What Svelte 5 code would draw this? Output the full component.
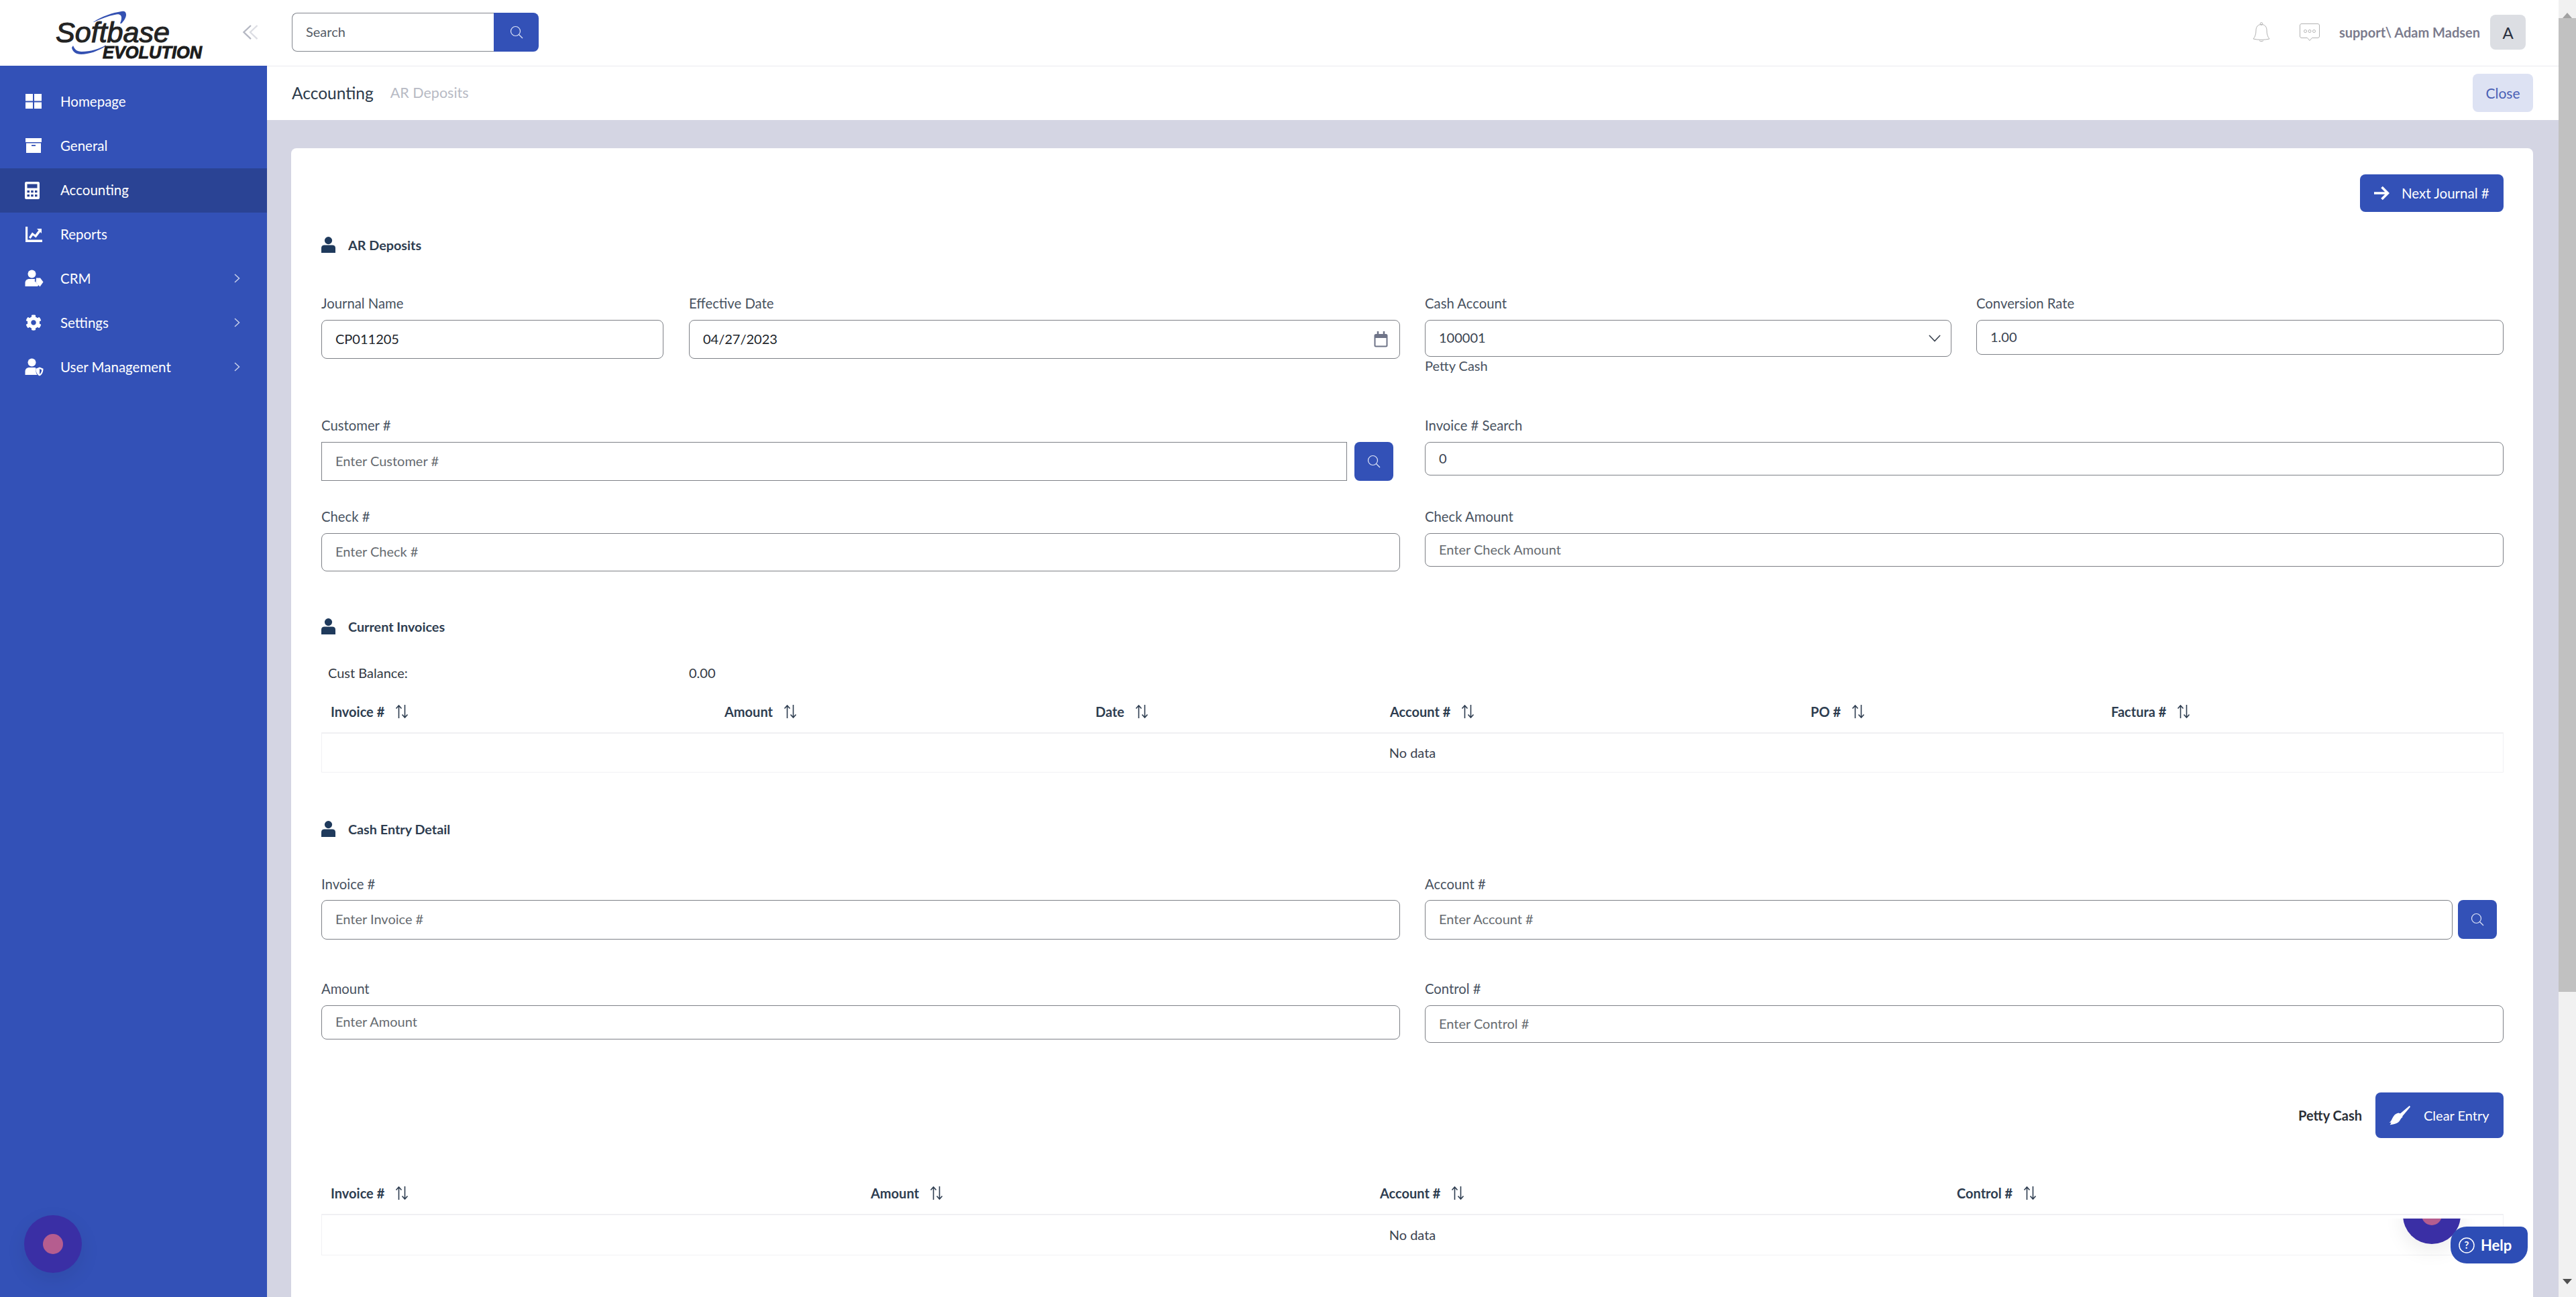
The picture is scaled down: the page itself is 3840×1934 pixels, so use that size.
<script>
  const nav = [
    { label: 'Homepage', icon: 'home' },
    { label: 'General', icon: 'archive' },
    { label: 'Accounting', icon: 'calc', active: true },
    { label: 'Reports', icon: 'chart' },
    { label: 'CRM', icon: 'crm', more: true },
    { label: 'Settings', icon: 'gear', more: true },
    { label: 'User Management', icon: 'shield', more: true }
  ];
  const invoiceCols = ['Invoice #', 'Amount', 'Date', 'Account #', 'PO #', 'Factura #'];
  const entryCols = ['Invoice #', 'Amount', 'Account #', 'Control #'];
</script>

{#snippet searchIcon()}
  <svg class="search-ico" viewBox="0 0 20 20" fill="none" stroke="currentColor" stroke-width="1.2">
    <circle cx="8.5" cy="8.5" r="7" />
    <path d="M13.5 13.5 19 19" />
  </svg>
{/snippet}

{#snippet sectionIcon()}
  <svg class="section-ico" viewBox="0 0 21 24">
    <ellipse cx="10.5" cy="5.6" rx="5.6" ry="5.6" fill="#1f3a5c" />
    <path d="M0 24v-7.5C0 14 2 12.5 4.5 12.5h12c2.500 0 4.500 1.500 4.500 4V24z" fill="#1f3a5c" />
  </svg>
{/snippet}

{#snippet sortIcon()}
  <svg class="sort-ico" viewBox="0 0 20 20" fill="none" stroke="#2e3d50" stroke-width="1.6">
    <path d="M5.500 20V1M1.500 5.500 5.500 1l4 4.500" />
    <path d="M14.500 0v19M10.500 14.500l4 4.500 4-4.500" />
  </svg>
{/snippet}

{#snippet navIcon(name)}
  <svg class="nav-ico" viewBox="0 0 30 30" fill="#fff">
    {#if name === 'home'}
      <path d="M3 4h11v10.500H3zM16 4h11v10.500H16zM3 16.500h11V26H3zM16 16.500h11V26H16z" />
    {:else if name === 'archive'}
      <path d="M3 4h24v6H3zM4 11.500h22V26H4z" />
      <rect x="12" y="14" width="6" height="1.800" fill="#3351b7" />
    {:else if name === 'calc'}
      <path fill-rule="evenodd" d="M4 3h18c1 0 2 1 2 2v22c0 1-1 2-2 2H4c-1 0-2-1-2-2V5c0-1 1-2 2-2zm1.500 3.500v6h15v-6zM5.500 16v3.200h3.500V16zm5.700 0v3.200h3.500V16zm5.800 0v3.200h3.500V16zM5.500 22v3.200h3.500V22zm5.700 0v3.200h3.500V22zm5.800 0v3.200h3.500V22z" />
    {:else if name === 'chart'}
      <path d="M3 4h3.200v19.400H28V27H3z" />
      <path d="M8 20l5-7.500 4.500 3.500 5-6.500-2.500-2.500H27v7l-2-2-6.500 8.500-4.500-3.500-3.500 5z" />
    {:else if name === 'crm'}
      <circle cx="12.500" cy="8.500" r="6" />
      <path d="M2.500 27v-5c0-4 3-6 6-6h8l1 1-1 2 6 6-1.500 2z" />
      <path d="M19 14.500h6l4.500 6-5 7-6-6.500z" />
    {:else if name === 'gear'}
      <svg x="3" y="3" width="24" height="24" viewBox="0 0 512 512">
        <path d="M487.4 315.7l-42.6-24.6c4.3-23.2 4.3-47 0-70.2l42.6-24.6c4.900-2.800 7.100-8.600 5.500-14-11.100-35.600-30-67.800-54.700-94.600-3.800-4.100-10-5.100-14.800-2.300L380.800 110c-17.900-15.400-38.500-27.300-60.800-35.100V25.800c0-5.600-3.900-10.500-9.400-11.700-36.700-8.200-74.300-7.800-109.200 0-5.500 1.200-9.400 6.100-9.400 11.700V75c-22.200 7.900-42.800 19.800-60.800 35.100L88.700 85.500c-4.900-2.800-11-1.900-14.800 2.300-24.700 26.700-43.600 58.900-54.700 94.600-1.700 5.400.6 11.200 5.500 14L67.300 221c-4.300 23.200-4.300 47 0 70.200l-42.600 24.600c-4.900 2.800-7.100 8.600-5.500 14 11.100 35.600 30 67.800 54.700 94.600 3.800 4.100 10 5.100 14.800 2.300l42.600-24.600c17.900 15.400 38.500 27.300 60.800 35.100v49.200c0 5.600 3.900 10.500 9.400 11.700 36.700 8.200 74.300 7.800 109.200 0 5.500-1.200 9.400-6.100 9.400-11.700v-49.200c22.200-7.900 42.800-19.800 60.800-35.100l42.600 24.600c4.900 2.800 11 1.900 14.800-2.300 24.700-26.700 43.600-58.900 54.700-94.600 1.500-5.500-.7-11.300-5.600-14.100zM256 336c-44.100 0-80-35.900-80-80s35.900-80 80-80 80 35.900 80 80-35.900 80-80 80z" />
      </svg>
    {:else}
      <circle cx="12.500" cy="8.500" r="6" />
      <path d="M2.500 27v-5c0-4 3-6 6-6h9l1 1v4c0 2 .5 4 2 6z" />
      <path fill-rule="evenodd" d="M24 15.500l5.500 2.200c0 5-1.500 8.800-5.500 10.800-4-2-5.500-5.800-5.500-10.800zm0 2.500v8c2-1.400 3-3.800 3.200-6.600z" />
    {/if}
  </svg>
{/snippet}

{#snippet field(label, value, placeholder, size)}
  <div class="field">
    <span class="label">{label}</span>
    <input class="inp {size}" {value} {placeholder} readonly />
  </div>
{/snippet}

{#snippet searchField(label, placeholder)}
  <div class="field">
    <span class="label">{label}</span>
    <div class="with-btn">
      <input class="inp square h58" {placeholder} readonly />
      <button class="square-btn">{@render searchIcon()}</button>
    </div>
  </div>
{/snippet}

{#snippet table(cols, kind)}
  <div class="table {kind}">
    <div class="thead">
      {#each cols as col}
        <div class="th">{col}{@render sortIcon()}</div>
      {/each}
    </div>
    <div class="tbody">No data</div>
  </div>
{/snippet}

<div class="page">
  <aside class="sidebar">
    <div class="brand">
      <svg class="logo" viewBox="0 0 398 98">
        <path d="M139 33C152 24 168 19 181 17c4-1 7 0 7 5 0 4-3 9-7 13l-2 0c2-5 3-9 1-12-2-2-5-2-9-1-10 2-21 6-31 11z" fill="#3451b2" />
        <path d="M109 68c2 5 5 9 13 9 12 0 27-4 36-10l-1 2c-10 7-25 12-36 12-8 0-13-4-14-10z" fill="#3451b2" />
        <text class="logo-main" x="83" y="63" textLength="170" lengthAdjust="spacingAndGlyphs">Softbase</text>
        <text class="logo-sub" x="153" y="87" textLength="148" lengthAdjust="spacingAndGlyphs">EVOLUTION</text>
      </svg>
      <svg class="collapse" viewBox="0 0 24 24" fill="none" stroke-width="2.400">
        <path d="M13 1 2 11.500 13 22" stroke="#b4b7c2" />
        <path d="M23 1 12 11.500 23 22" stroke="#dcdde3" />
      </svg>
    </div>
    <nav class="nav">
      {#each nav as item}
        <div class="nav-item" class:active={item.active}>
          <span class="nav-ico-box">{@render navIcon(item.icon)}</span>
          <span class="nav-label">{item.label}</span>
          {#if item.more}
            <svg class="nav-more" viewBox="0 0 9 14" fill="none" stroke="#c8d0ea" stroke-width="1.500">
              <path d="M1 1l6.500 6L1 13" />
            </svg>
          {/if}
        </div>
      {/each}
    </nav>
    <div class="orb left-orb"><span class="orb-dot"></span></div>
  </aside>

  <main class="main">
    <header class="topbar">
      <div class="search">
        <input class="search-input" placeholder="Search" readonly />
        <button class="search-btn">{@render searchIcon()}</button>
      </div>
      <div class="top-right">
        <svg class="bell" viewBox="0 0 26 30" fill="none" stroke="#b2b2b2" stroke-width="1">
          <path d="M13 3.500c-5 0-8 3.500-8 8.500 0 6-1.500 10-4 13 7 1.800 17 1.800 24 0-2.500-3-4-7-4-13 0-5-3-8.500-8-8.500z" />
          <circle cx="13" cy="2.500" r="1.800" />
          <path d="M10 27.500c1 1.600 5 1.600 6 0" />
        </svg>
        <svg class="chat" viewBox="0 0 30 26" fill="none" stroke="#b2b2b2" stroke-width="1">
          <path d="M3 .5h24c1.500 0 2.500 1 2.500 2.500v16c0 1.500-1 2.500-2.500 2.500h-8.500L15 25.500l-3.500-4H3c-1.500 0-2.500-1-2.500-2.500V3C.5 1.500 1.500.5 3 .5z" />
          <circle cx="8.500" cy="11.500" r="2" /><circle cx="15" cy="11.500" r="2" /><circle cx="21.500" cy="11.500" r="2" />
        </svg>
        <span class="user">support\ Adam Madsen</span>
        <span class="avatar">A</span>
      </div>
    </header>

    <div class="crumbs">
      <span class="crumb-main">Accounting</span>
      <span class="crumb-sub">AR Deposits</span>
      <button class="close">Close</button>
    </div>

    <div class="content">
      <section class="card">
        <div class="actions">
          <button class="primary next">
            <svg class="next-ico" viewBox="0 0 24 24" fill="none" stroke="#fff" stroke-width="3.600">
              <path d="M1 12h20M12.500 3l9 9-9 9" />
            </svg>
            Next Journal #
          </button>
        </div>

        <div class="section first">{@render sectionIcon()}AR Deposits</div>

        <div class="row row-1">
          <div class="half first-half">
            {@render field('Journal Name', 'CP011205', '', 'h58 dark')}
            <div class="field">
              <span class="label">Effective Date</span>
              <div class="adorned">
                <input class="inp h58 dark" value="04/27/2023" readonly />
                <svg class="cal" viewBox="0 0 21 24" fill="none" stroke="#6f7488" stroke-width="2">
                  <rect x="1.500" y="5" width="18" height="17.500" rx="1.500" />
                  <path d="M1.500 8h18" stroke-width="4" />
                  <path d="M6 0v5M15 0v5" stroke-width="2.500" />
                </svg>
              </div>
            </div>
          </div>
          <div class="half second-half">
            <div class="field">
              <span class="label">Cash Account</span>
              <div class="adorned">
                <input class="inp h55" value="100001" readonly />
                <svg class="chev" viewBox="0 0 20 12" fill="none" stroke="#3c4450" stroke-width="1.800">
                  <path d="M1 1l9 9.500L19 1" />
                </svg>
              </div>
              <span class="hint">Petty Cash</span>
            </div>
            {@render field('Conversion Rate', '1.00', '', 'h52')}
          </div>
        </div>

        <div class="row row-2">
          {@render searchField('Customer #', 'Enter Customer #')}
          {@render field('Invoice # Search', '0', '', 'h50')}
        </div>

        <div class="row row-3">
          {@render field('Check #', '', 'Enter Check #', 'h57')}
          {@render field('Check Amount', '', 'Enter Check Amount', 'h50')}
        </div>

        <div class="section second">{@render sectionIcon()}Current Invoices</div>

        <div class="balance">
          <span class="balance-label">Cust Balance:</span>
          <span>0.00</span>
        </div>

        {@render table(invoiceCols, 'invoices')}

        <div class="section third">{@render sectionIcon()}Cash Entry Detail</div>

        <div class="row row-4">
          {@render field('Invoice #', '', 'Enter Invoice #', 'h59')}
          <div class="field">
            <span class="label">Account #</span>
            <div class="with-btn wide">
              <input class="inp h59" placeholder="Enter Account #" readonly />
              <button class="square-btn">{@render searchIcon()}</button>
            </div>
          </div>
        </div>

        <div class="row row-5">
          {@render field('Amount', '', 'Enter Amount', 'h51')}
          {@render field('Control #', '', 'Enter Control #', 'h56')}
        </div>

        <div class="clear-row">
          <span class="clear-name">Petty Cash</span>
          <button class="primary clear">
            <svg class="broom" viewBox="0 0 28 28" fill="#fff">
              <path d="M27 1.500 28 3 17.500 15.500l-3.500-3z" />
              <path d="M12.500 11c3 .5 5 2.500 5.500 5.500-3 1.500-3 5-6 7-2.500 1.500-6 2.500-10.500 3 .8-1 1.300-2 1.600-3-1 .2-2 .2-2.600.2 3-2 3.500-5.200 5.500-8.200 1.500-2.500 4-4 6.500-4.500z" />
            </svg>
            Clear Entry
          </button>
        </div>

        {@render table(entryCols, 'entries')}
      </section>
    </div>

    <div class="orb-clip"><div class="orb right-orb"><span class="orb-dot"></span></div></div>
    <button class="help">
      <svg class="help-ico" viewBox="0 0 24 24" fill="none" stroke="#fff" stroke-width="1.500">
        <circle cx="12" cy="12" r="11" />
        <text x="12" y="17" text-anchor="middle" class="help-q">?</text>
      </svg>
      Help
    </button>
  </main>

  <div class="scrollbar">
    <span class="arrow up"></span>
    <span class="thumb"></span>
    <span class="arrow down"></span>
  </div>
</div>

<style>
  :global(body) {
    margin: 0;
    background: #fff;
  }

  .page {
    display: flex;
    width: 3840px;
    height: 1934px;
    overflow: hidden;
    font-family: Lato, 'Noto Sans', sans-serif;
    font-size: 20px;
    color: #2e3d50;
  }

  button {
    font-family: inherit;
    border: none;
    cursor: pointer;
  }

  /* sidebar */
  .sidebar {
    position: relative;
    flex: 0 0 398px;
    min-width: 0;
    background: #3351b7;
  }

  .brand {
    height: 98px;
    background: #fff;
    position: relative;
  }

  .logo {
    display: block;
    width: 398px;
    height: 98px;
  }

  .logo-main {
    font-family: 'Liberation Sans', sans-serif;
    font-style: italic;
    font-size: 43px;
    fill: #232323;
    stroke: #232323;
    stroke-width: 1.1px;
  }

  .logo-sub {
    font-family: 'Liberation Sans', sans-serif;
    font-style: italic;
    font-weight: 700;
    font-size: 25px;
    fill: #1c1c1c;
    stroke: #1c1c1c;
    stroke-width: 0.9px;
  }

  .collapse {
    position: absolute;
    left: 361px;
    top: 37px;
    width: 24px;
    height: 23px;
  }

  .nav {
    padding-top: 21px;
  }

  .nav-item {
    display: flex;
    align-items: center;
    height: 66px;
    padding: 0 0 2px 35px;
    box-sizing: border-box;
    color: #fff;
    font-size: 20.500px;
  }

  .nav-item.active {
    background: #2a4394;
  }

  .nav-ico-box {
    display: flex;
    width: 55px;
  }

  .nav-ico {
    width: 30px;
    height: 30px;
  }

  .nav-label {
    flex: 1;
  }

  .nav-more {
    width: 9px;
    height: 14px;
    margin-right: 40px;
  }

  .orb {
    display: flex;
    align-items: center;
    justify-content: center;
    width: 86px;
    height: 86px;
    border-radius: 50%;
    background: #3a2fa5;
    box-shadow: 0 10px 30px rgba(0, 0, 0, 0.08);
  }

  .left-orb {
    position: absolute;
    left: 36px;
    top: 1812px;
  }

  .orb-dot {
    width: 30px;
    height: 30px;
    border-radius: 50%;
    background: #b55d8f;
  }

  /* main column */
  .main {
    position: relative;
    flex: 1;
    min-width: 0;
    display: flex;
    flex-direction: column;
    background: #d4d5e3;
  }

  .topbar {
    flex: 0 0 99px;
    box-sizing: border-box;
    display: flex;
    align-items: center;
    justify-content: space-between;
    padding: 0 49px 2px 37px;
    background: #fff;
    border-bottom: 1px solid #e9e9ee;
  }

  .search {
    display: flex;
    width: 368px;
    height: 58px;
  }

  .search-input {
    flex: 1;
    min-width: 0;
    box-sizing: border-box;
    padding: 0 20px 2px;
    border: 1.5px solid #82868e;
    border-right: none;
    border-radius: 8px 0 0 8px;
    font: inherit;
    font-size: 20px;
    outline: none;
  }

  .search-input::placeholder {
    color: #555c66;
  }

  .search-btn {
    width: 67px;
    padding: 0;
    display: flex;
    align-items: center;
    justify-content: center;
    color: #dfe5f7;
    background: #3351b7;
    border-radius: 0 8px 8px 0;
  }

  .search-ico {
    width: 20px;
    height: 20px;
  }

  .top-right {
    display: flex;
    align-items: center;
  }

  .bell {
    width: 26px;
    height: 30px;
    margin-right: 44px;
  }

  .chat {
    width: 30px;
    height: 26px;
    margin-right: 29px;
  }

  .user {
    font-size: 20px;
    font-weight: 700;
    color: #7b7b8d;
    margin-right: 15px;
  }

  .avatar {
    display: flex;
    align-items: center;
    justify-content: center;
    width: 53px;
    height: 52px;
    border-radius: 8px;
    background: #dcdee3;
    color: #2a3040;
    font-size: 24px;
  }

  .crumbs {
    flex: 0 0 80px;
    box-sizing: border-box;
    display: flex;
    align-items: center;
    gap: 25px;
    padding: 0 38px 2px 37px;
    background: #fff;
  }

  .crumb-main {
    font-size: 24.500px;
    color: #2c3a4a;
  }

  .crumb-sub {
    font-size: 21.500px;
    color: #b7bac4;
  }

  .close {
    margin-left: auto;
    width: 90px;
    height: 57px;
    border-radius: 8px;
    background: #dde2f3;
    color: #4a5fb5;
    font-size: 21px;
  }

  .content {
    padding: 42px 38px 0 36px;
  }

  .card {
    box-sizing: border-box;
    padding: 39px 44px 0 45px;
    height: 1800px;
    background: #fff;
    border-radius: 8px 8px 0 0;
  }

  .actions {
    display: flex;
    justify-content: flex-end;
  }

  .primary {
    display: flex;
    align-items: center;
    color: #fff;
    background: #3351b7;
    border-radius: 8px;
    font-size: 20.500px;
  }

  .next {
    width: 214px;
    height: 56px;
    padding: 0 0 0 20px;
    gap: 18px;
  }

  .next-ico {
    width: 24px;
    height: 24px;
  }

  .section {
    display: flex;
    align-items: center;
    gap: 19px;
    height: 24px;
    font-size: 19.800px;
    font-weight: 700;
    color: #2e3d50;
  }

  .section-ico {
    width: 21px;
    height: 24px;
  }

  .section.first {
    margin-top: 37px;
  }

  .section.second {
    margin-top: 70px;
  }

  .section.third {
    margin-top: 72px;
  }

  .row {
    display: grid;
    grid-template-columns: 1608px 1608px;
    column-gap: 37px;
    align-items: start;
  }

  .row-1 {
    margin-top: 63px;
  }

  .row-2 {
    margin-top: 65px;
  }

  .row-3 {
    margin-top: 41px;
  }

  .row-4 {
    margin-top: 58px;
  }

  .row-5 {
    margin-top: 61px;
  }

  .half {
    display: grid;
    column-gap: 38px;
    align-items: start;
  }

  .first-half {
    grid-template-columns: 510px 1fr;
  }

  .second-half {
    grid-template-columns: 785px 1fr;
    column-gap: 37px;
  }

  .field {
    display: flex;
    flex-direction: column;
    min-width: 0;
  }

  .label {
    display: block;
    height: 24px;
    line-height: 24px;
    margin-bottom: 13px;
    font-size: 20.300px;
    color: #48525f;
  }

  .row-4 .label {
    margin-bottom: 12px;
  }

  .hint {
    line-height: 24px;
    color: #48525f;
    margin-top: 1px;
  }

  .inp {
    display: block;
    box-sizing: border-box;
    width: 100%;
    padding: 0 20px 3px;
    border: 1.5px solid #7d8086;
    border-radius: 8px;
    background: #fff;
    font: inherit;
    color: #3a4350;
    outline: none;
  }

  .inp::placeholder {
    color: #666b70;
  }

  .inp.dark {
    color: #22262c;
  }

  .inp.square {
    border-radius: 0;
  }

  .h50 { height: 50px; }
  .h51 { height: 51px; }
  .h52 { height: 52px; }
  .h55 { height: 55px; }
  .h56 { height: 56px; }
  .h57 { height: 57px; }
  .h58 { height: 58px; }
  .h59 { height: 59px; }

  .adorned {
    position: relative;
  }

  .cal {
    position: absolute;
    right: 18px;
    top: 17px;
    width: 21px;
    height: 24px;
  }

  .chev {
    position: absolute;
    right: 16px;
    top: 22px;
    width: 18px;
    height: 11px;
  }

  .with-btn {
    display: flex;
    gap: 11px;
    padding-right: 10px;
  }

  .with-btn .inp {
    flex: 1;
    min-width: 0;
  }

  .with-btn.wide {
    gap: 8px;
  }

  .square-btn {
    flex: 0 0 58px;
    height: 58px;
    padding: 0;
    display: flex;
    align-items: center;
    justify-content: center;
    color: #dfe5f7;
    background: #3351b7;
    border-radius: 8px;
  }

  .balance {
    display: flex;
    height: 24px;
    line-height: 24px;
    margin-top: 45px;
    padding-left: 10px;
    color: #333a44;
  }

  .balance-label {
    width: 538px;
  }

  .table {
    margin-top: 17px;
  }

  .table.entries {
    margin-top: 53px;
  }

  .thead {
    display: grid;
    height: 62px;
    padding-bottom: 2px;
    align-items: center;
    border-bottom: 2px solid #f0f0f3;
    box-sizing: border-box;
  }

  .invoices .thead {
    grid-template-columns: 587px 553px 439px 627px 448px 599px;
  }

  .entries .thead {
    grid-template-columns: 805px 759px 860px 829px;
  }

  .th {
    display: flex;
    align-items: center;
    gap: 16px;
    padding-left: 14px;
    font-weight: 700;
    color: #2e3d50;
  }

  .sort-ico {
    width: 20px;
    height: 20px;
  }

  .tbody {
    box-sizing: border-box;
    height: 58px;
    line-height: 56px;
    text-align: center;
    color: #3a4350;
    border: 1px solid #f1f1f4;
    border-top: none;
  }

  .entries .tbody {
    height: 60px;
    line-height: 58px;
  }

  .clear-row {
    display: flex;
    align-items: center;
    justify-content: flex-end;
    gap: 20px;
    margin-top: 74px;
  }

  .clear-name {
    font-weight: 700;
    color: #2b2f36;
  }

  .clear {
    width: 191px;
    height: 68px;
    padding: 0 0 0 20px;
    gap: 20px;
    font-size: 20px;
  }

  .broom {
    width: 32px;
    height: 32px;
  }

  .orb-clip {
    position: absolute;
    left: 3120px;
    top: 1817px;
    width: 260px;
    height: 117px;
    overflow: hidden;
  }

  .right-orb {
    position: absolute;
    left: 64px;
    top: -48px;
  }

  .help {
    position: absolute;
    left: 3255px;
    top: 1829px;
    width: 115px;
    height: 55px;
    padding: 0 0 0 12px;
    display: flex;
    align-items: center;
    gap: 9px;
    background: #2d4db5;
    color: #fff;
    font-size: 22px;
    font-weight: 700;
    border-radius: 24px 10px 24px 24px;
  }

  .help-ico {
    width: 24px;
    height: 24px;
  }

  .help-q {
    font-size: 15px;
    fill: #fff;
    stroke: none;
  }

  /* window scrollbar */
  .scrollbar {
    flex: 0 0 26px;
    display: flex;
    flex-direction: column;
    align-items: center;
    background: #f1f1f1;
  }

  .arrow {
    flex: 0 0 27px;
    width: 0;
    height: 0;
    box-sizing: border-box;
  }

  .arrow.up {
    border-left: 7px solid transparent;
    border-right: 7px solid transparent;
    border-bottom: 8px solid #a3a3a3;
    border-top: 11px solid transparent;
  }

  .arrow.down {
    margin-top: auto;
    border-left: 7px solid transparent;
    border-right: 7px solid transparent;
    border-top: 8px solid #505050;
    border-bottom: 11px solid transparent;
    margin-bottom: 0;
  }

  .thumb {
    width: 100%;
    height: 1452px;
    background: #c1c1c1;
  }
</style>
